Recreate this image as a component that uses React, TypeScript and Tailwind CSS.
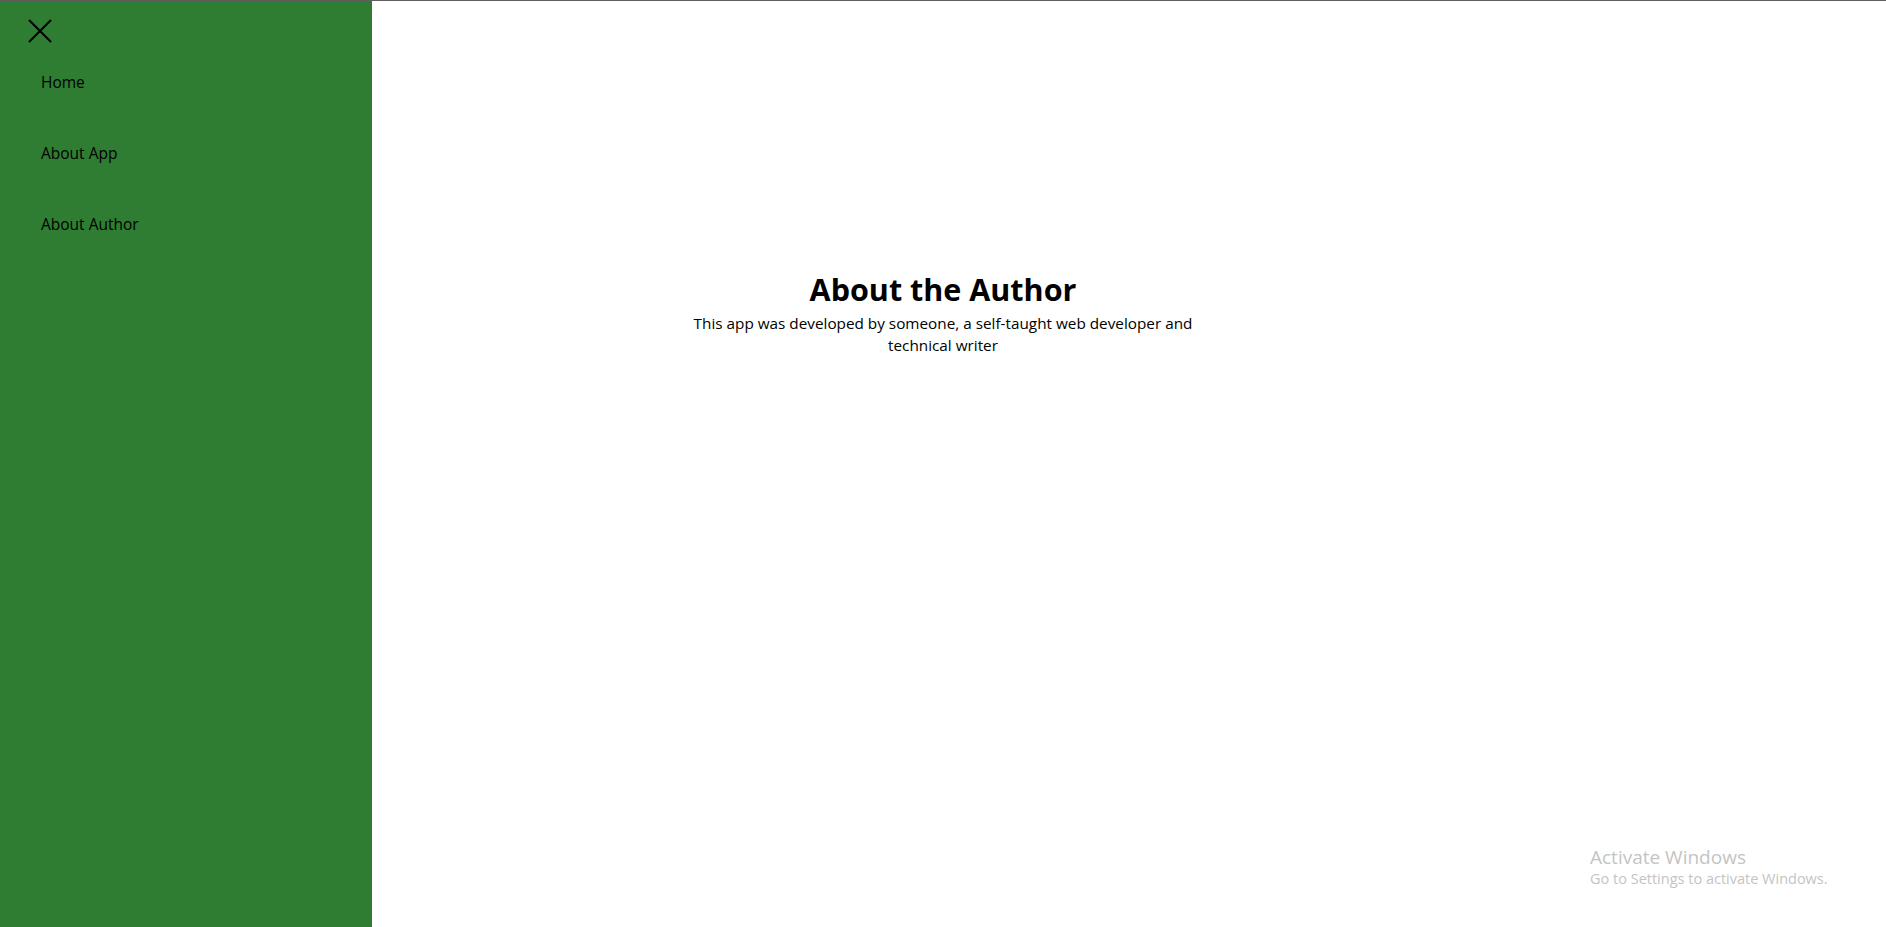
import React from "react";

export default function App() {
  const font = { fontFamily: '"Open Sans", "Noto Sans", sans-serif' };
  return (
    <div className="relative h-[927px] w-full overflow-hidden bg-white" style={font}>
      <div className="h-px w-full bg-[#5f5f5f]" />
      <main className="flex flex-col items-center pt-[267px]">
        <div className="flex max-w-[520px] flex-col items-center text-center text-black">
          <h1 className="text-[30.5px] font-bold leading-[42px]">About the Author</h1>
          <p className="mt-[2px] text-[15.3px] leading-[22px]">
            This app was developed by someone, a self-taught web developer and technical writer
          </p>
        </div>
      </main>
      <aside className="absolute left-0 top-px bottom-0 flex w-[372px] flex-col bg-[#2e7d32]">
        <button className="ml-[28px] mt-[18px] h-[24px] w-[24px] text-black" aria-label="Close">
          <svg viewBox="0 0 24 24" width="24" height="24" fill="none" stroke="currentColor" strokeWidth="2">
            <path d="M1 1L23 23M23 1L1 23" />
          </svg>
        </button>
        <nav className="mt-[29px] flex flex-col gap-[50px] pl-[41px] text-[15.5px] leading-[21px] text-black">
          <a>Home</a>
          <a>About App</a>
          <a>About Author</a>
        </nav>
      </aside>
      <div className="absolute left-[1590px] top-[846px] text-[#c4c4c4]">
        <div className="text-[19px] leading-[23px]">Activate Windows</div>
        <div className="text-[14.5px] leading-[20px]">Go to Settings to activate Windows.</div>
      </div>
    </div>
  );
}
